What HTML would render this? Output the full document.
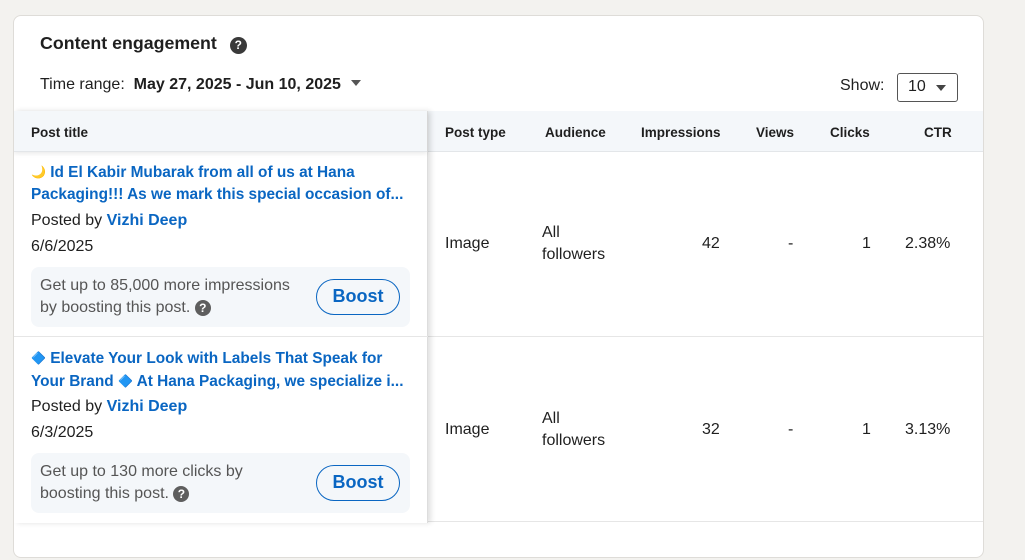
<!DOCTYPE html>
<html><head><meta charset="utf-8"><style>
*{margin:0;padding:0;box-sizing:border-box}
body{width:1025px;height:560px;background:#f3f2ef;font-family:"Liberation Sans",sans-serif;color:#1f1f1f;position:relative;overflow:hidden}
.card{position:absolute;left:13px;top:15px;width:971px;height:543px;background:#fff;border:1px solid #dedcd8;border-radius:8px;overflow:hidden}
.a{position:absolute;white-space:nowrap}
.hdr{position:absolute;left:0;top:95px;width:971px;height:41px;background:#f4f7fa;border-bottom:1px solid #e3e6e9}
.th{position:absolute;top:14px;font-size:13.5px;font-weight:bold;color:#1f1f1f}
.left{position:absolute;left:0;top:95px;width:414px;height:412px;background:#fff;box-shadow:3px 0 5px rgba(0,0,0,.12);border-right:1px solid #ddd}
.left .h{height:41px;background:#f4f7fa;border-bottom:1px solid #e3e6e9;box-shadow:0 2px 4px rgba(0,0,0,.08)}
.link{color:#0a66c2;font-weight:bold;font-size:15.4px;line-height:22px}
.em{font-size:12px;vertical-align:1px}
.t16{font-size:16px}
.boostbox{position:absolute;left:17px;width:379px;height:60px;background:#f4f7fa;border-radius:8px}
.btn{position:absolute;right:10px;top:12px;width:84px;height:36px;border:1.5px solid #0a66c2;border-radius:18px;color:#0a66c2;font-weight:bold;font-size:18px;text-align:center;line-height:33px}
.q{display:inline-block;width:16px;height:16px;border-radius:50%;background:#5e5e5e;color:#fff;font-size:12px;font-weight:bold;text-align:center;line-height:16px;vertical-align:0}
.rowline{position:absolute;left:0;width:971px;height:1px;background:#e6e6e6}
</style></head><body>
<div class="card">
 <div class="a" style="left:26px;top:17px;font-size:17.8px;font-weight:bold">Content engagement <span class="q" style="width:17px;height:17px;line-height:17px;margin-left:8px;background:#3a3a3a">?</span></div>
 <div class="a" style="left:26px;top:60px;font-size:16px">Time range:&nbsp; <b>May 27, 2025 - Jun 10, 2025</b> <span style="display:inline-block;margin-left:6px;border-left:5px solid transparent;border-right:5px solid transparent;border-top:6px solid #555;vertical-align:3px"></span></div>
 <div class="a" style="left:826px;top:61px;font-size:16px">Show:</div>
 <div class="a" style="left:883px;top:57px;width:61px;height:29px;border:1px solid #555;border-radius:3px;font-size:16px;padding:4px 0 0 10px">10 <span style="position:absolute;left:38px;top:11px;border-left:5px solid transparent;border-right:5px solid transparent;border-top:6px solid #444"></span></div>
 <div class="hdr">
  <div class="th" style="left:431px">Post type</div>
  <div class="th" style="left:531px">Audience</div>
  <div class="th" style="left:627px">Impressions</div>
  <div class="th" style="left:742px">Views</div>
  <div class="th" style="left:816px">Clicks</div>
  <div class="th" style="left:910px">CTR</div>
 </div>
 <div class="rowline" style="top:320px"></div>
 <div class="rowline" style="top:505px"></div>
 <div class="a t16" style="left:431px;top:219px">Image</div>
 <div class="a t16" style="left:528px;top:206px;line-height:22px">All<br>followers</div>
 <div class="a t16" style="left:688px;top:219px">42</div>
 <div class="a t16" style="left:774px;top:219px">-</div>
 <div class="a t16" style="left:848px;top:219px">1</div>
 <div class="a t16" style="left:891px;top:219px">2.38%</div>
 <div class="a t16" style="left:431px;top:405px">Image</div>
 <div class="a t16" style="left:528px;top:392px;line-height:22px">All<br>followers</div>
 <div class="a t16" style="left:688px;top:405px">32</div>
 <div class="a t16" style="left:774px;top:405px">-</div>
 <div class="a t16" style="left:848px;top:405px">1</div>
 <div class="a t16" style="left:891px;top:405px">3.13%</div>
 <div class="left">
  <div class="h"><div class="th" style="left:17px">Post title</div></div>
  <div class="a link" style="left:17px;top:50px"><span class="em">🌙</span> Id El Kabir Mubarak from all of us at Hana<br>Packaging!!! As we mark this special occasion of...</div>
  <div class="a t16" style="left:17px;top:99px">Posted by <span class="link" style="font-size:16px">Vizhi Deep</span></div>
  <div class="a t16" style="left:17px;top:127px">6/6/2025</div>
  <div class="boostbox" style="top:156px"><div class="a" style="left:9px;top:8px;font-size:16px;line-height:22px;color:#555">Get up to 85,000 more impressions<br>by boosting this post. <span class="q">?</span></div><div class="btn">Boost</div></div>
  <div style="position:absolute;left:0;top:225px;width:414px;height:1px;background:#e6e6e6"></div>
  <div class="a link" style="left:17px;top:236px"><span class="em">🔷</span> Elevate Your Look with Labels That Speak for<br>Your Brand <span class="em">🔷</span> At Hana Packaging, we specialize i...</div>
  <div class="a t16" style="left:17px;top:285px">Posted by <span class="link" style="font-size:16px">Vizhi Deep</span></div>
  <div class="a t16" style="left:17px;top:313px">6/3/2025</div>
  <div class="boostbox" style="top:342px"><div class="a" style="left:9px;top:8px;font-size:16px;line-height:22px;color:#555">Get up to 130 more clicks by<br>boosting this post. <span class="q">?</span></div><div class="btn">Boost</div></div>
 </div>
</div>
</body></html>
